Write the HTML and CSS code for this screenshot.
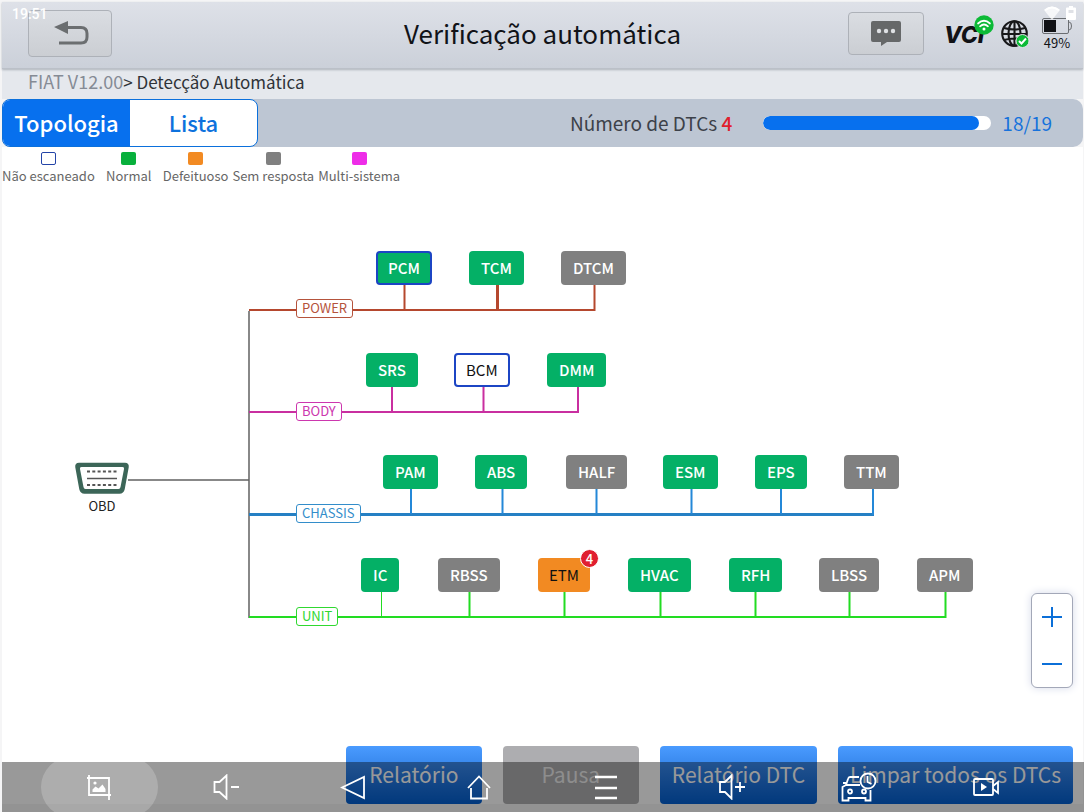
FILE: index.html
```html
<!DOCTYPE html>
<html lang="pt">
<head>
<meta charset="utf-8">
<meta name="viewport" content="width=device-width, initial-scale=1">
<title>Verificação automática</title>
<link rel="stylesheet" href="styles.css">
</head>
<body>
<div class="app">
  <header class="header">
    <time class="clock">19:51</time>
    <div class="header-left">
      <button class="tool back" type="button" aria-label="Voltar">
        <svg width="36" height="28" viewBox="0 0 36 28"><path d="M0 8 14 2v13z" fill="#6b6e70"/><path d="M13 8.500h14q6 0 6 6v3.500q0 6-6 6H5" fill="none" stroke="#6b6e70" stroke-width="3"/></svg>
      </button>
    </div>
    <h1 class="title">Verificação automática</h1>
    <div class="header-right">
      <button class="tool message" type="button" aria-label="Mensagens">
        <svg width="30" height="25" viewBox="0 0 30 25"><path d="M2 0h26q2 0 2 2v17q0 2-2 2H16l-6 4v-4H2q-2 0-2-2V2q0-2 2-2z" fill="#666869"/><g fill="#dfe1e4"><circle cx="8" cy="10" r="2.200"/><circle cx="15" cy="10" r="2.200"/><circle cx="22" cy="10" r="2.200"/></g></svg>
      </button>
      <div class="vci">VCI
        <svg class="vci-badge" width="20" height="20" viewBox="0 0 20 20"><circle cx="10" cy="10" r="9.700" fill="#0cba36"/><g fill="none" stroke="#fff" stroke-width="1.700" stroke-linecap="round"><path d="M4 8.500q6-5.500 12 0M6 11.300q4-3.600 8 0"/></g><circle cx="10" cy="14" r="1.500" fill="#fff"/></svg>
      </div>
      <svg class="globe" width="29" height="29" viewBox="0 0 29 29"><g fill="none" stroke="#171719" stroke-width="2.100"><circle cx="13.500" cy="13.500" r="12.300"/><ellipse cx="13.500" cy="13.500" rx="6" ry="12.300"/><path d="M13.500 1v25M3 8q10.500 3 21 0M1 14h25M3 20q10.500-3 21 0"/></g><circle cx="21.500" cy="21" r="6.500" fill="#0cba36" stroke="#e1e4e8"/><path d="m18 21 2.500 2.500 4.500-5" fill="none" stroke="#fff" stroke-width="1.900"/></svg>
      <div class="power">
        <svg width="30" height="16" viewBox="0 0 30 16"><rect x=".5" y=".5" width="26" height="15" rx="1.500" fill="none" stroke="#6b6e72"/><path d="M27 4q2.500 0 2.500 4T27 12" fill="none" stroke="#6b6e72"/><rect x="2" y="2" width="12" height="12" fill="#111216"/></svg>
        <span>49%</span>
      </div>
    </div>
    <div class="system-icons">
      <svg width="16" height="14" viewBox="0 0 16 14"><path d="M0 4q8-7 16 0L8 14z" fill="#fff" fill-opacity=".75"/><path d="M1 4.300q7-5.500 14 0" fill="none" stroke="#fff" stroke-width="2"/></svg>
      <svg width="10" height="14" viewBox="0 0 10 14"><path d="M3 0h4v1.500h2q1 0 1 1V13q0 1-1 1H1q-1 0-1-1V2.500q0-1 1-1h2z" fill="#fff"/><path d="M2.500 4h5v3h-5z" fill="#dfe1e6"/></svg>
    </div>
  </header>

  <nav class="crumbs"><a href="#">FIAT V12.00</a>&gt; Detecção Automática</nav>

  <div class="toolbar">
    <div class="tabs">
      <button class="tab tab-active" type="button">Topologia</button>
      <button class="tab" type="button">Lista</button>
    </div>
    <div class="scan">
      <label for="scan-progress">Número de DTCs <strong>4</strong></label>
      <progress class="bar" id="scan-progress" value="18" max="19"></progress>
      <span class="count">18/19</span>
    </div>
  </div>

  <main class="stage">
    <ul class="legend">
      <li><i class="swatch swatch-open"></i>Não escaneado</li>
      <li class="legend-wide"><i class="swatch swatch-ok"></i>Normal</li>
      <li><i class="swatch swatch-fault"></i>Defeituoso</li>
      <li><i class="swatch swatch-mute"></i>Sem resposta</li>
      <li><i class="swatch swatch-multi"></i>Multi-sistema</li>
    </ul>

    <svg class="wires" width="1080" height="590" aria-hidden="true">
      <g transform="translate(-2 -147)" fill="none" stroke-width="2">
        <path d="M128 480h121M249 311v307" stroke="#626262" stroke-width="1.500"/>
        <path d="M249 310h346.500M404.500 285v25M594.500 284v26" stroke="#b5482e"/>
        <path d="M497.500 284v26" stroke="#b5482e" stroke-width="3"/>
        <path d="M249 412h330M392 387v25M483.500 387v25M578 387v25" stroke="#c92fa0"/>
        <path d="M249 514.500h625" stroke="#2580c4" stroke-width="3"/>
        <path d="M411 489v25M502.500 489v25M596.500 489v25M691.500 489v25M781 489v25M873 489v26" stroke="#2488d8"/>
        <path d="M249 617h697.500M469.500 592v25M564.500 592v25M660.500 592v25M755.500 592v25M849.500 592v25M945.500 592v25" stroke="#22dc22"/>
        <path d="M381.500 592v25" stroke="#22dc22" stroke-width="1"/>
      </g>
    </svg>

    <div class="obd">
      <svg width="56" height="34" viewBox="0 0 56 34"><path d="M5 3h46q3 0 2.500 3L49.500 28q-.8 3.500-4 3.500h-35q-3.200 0-4-3.500L2.500 6q-.5-3 2.500-3z" fill="#3c6658" stroke="#3c6658" stroke-width="2.500"/><path d="M7.500 6h41q2 0 1.500 2l-3.500 18q-.3 2-2 2h-33q-1.700 0-2-2L6 8q-.5-2 1.500-2z" fill="#fff"/><path d="M13 10.500h30M13 24h30" stroke="#555" stroke-width="2" stroke-dasharray="3 2.300"/><path d="M13 17.500h30" stroke="#555" stroke-width="1.500"/></svg>
      <span>OBD</span>
    </div>

    <span class="bus bus-power">POWER</span>
    <button class="node ok selected n-pcm" type="button">PCM</button>
    <button class="node ok n-tcm" type="button">TCM</button>
    <button class="node mute n-dtcm" type="button">DTCM</button>

    <span class="bus bus-body">BODY</span>
    <button class="node ok n-srs" type="button">SRS</button>
    <button class="node open n-bcm" type="button">BCM</button>
    <button class="node ok n-dmm" type="button">DMM</button>

    <span class="bus bus-chassis">CHASSIS</span>
    <button class="node ok n-pam" type="button">PAM</button>
    <button class="node ok n-abs" type="button">ABS</button>
    <button class="node mute n-half" type="button">HALF</button>
    <button class="node ok n-esm" type="button">ESM</button>
    <button class="node ok n-eps" type="button">EPS</button>
    <button class="node mute n-ttm" type="button">TTM</button>

    <span class="bus bus-unit">UNIT</span>
    <button class="node ok n-ic" type="button">IC</button>
    <button class="node mute n-rbss" type="button">RBSS</button>
    <button class="node fault n-etm" type="button">ETM<span class="badge">4</span></button>
    <button class="node ok n-hvac" type="button">HVAC</button>
    <button class="node ok n-rfh" type="button">RFH</button>
    <button class="node mute n-lbss" type="button">LBSS</button>
    <button class="node mute n-apm" type="button">APM</button>

    <div class="zoom">
      <button type="button" aria-label="Aumentar"><svg width="20" height="20" viewBox="0 0 20 20"><path d="M0 10h20M10 0v20" stroke="#0b6fd8" stroke-width="2"/></svg></button>
      <button type="button" aria-label="Diminuir"><svg width="20" height="20" viewBox="0 0 20 20"><path d="M0 10h20" stroke="#0b6fd8" stroke-width="2"/></svg></button>
    </div>
  </main>

  <footer class="actions">
    <button class="action" type="button">Relatório</button>
    <button class="action paused" type="button">Pausa</button>
    <button class="action" type="button">Relatório DTC</button>
    <button class="action" type="button">Limpar todos os DTCs</button>
  </footer>

  <nav class="system-bar">
    <button class="sys sys-active" type="button" aria-label="Captura"><svg width="26" height="26" viewBox="0 0 26 26"><path d="M1 4h22v22M3 1v20h22" stroke-width="1.800"/><path d="M6.500 18v-2.500l3-3 3 2 4-4 3 4.500v3z" fill="#fff" stroke="none"/><circle cx="9" cy="9" r="1.600" fill="#fff" stroke="none"/></svg></button>
    <button class="sys" type="button" aria-label="Diminuir volume"><svg width="26" height="26" viewBox="0 0 26 26"><path d="M1.500 8h5l7-6.500v23l-7-6.500h-5zM18 13h8"/></svg></button>
    <button class="sys" type="button" aria-label="Voltar"><svg width="26" height="26" viewBox="0 0 26 26"><path d="M2 13.500 24 3v21z"/></svg></button>
    <button class="sys" type="button" aria-label="Início"><svg width="26" height="26" viewBox="0 0 26 26"><path d="M2 14 13 2.500 24 14M5 14v10.500h16V14"/></svg></button>
    <button class="sys" type="button" aria-label="Menu"><svg width="26" height="26" viewBox="0 0 26 26"><path class="thick" d="M2 3h22M2 14h22M2 24h22"/></svg></button>
    <button class="sys" type="button" aria-label="Aumentar volume"><svg width="26" height="26" viewBox="0 0 26 26"><path d="M1 8h5l6.500-6.500v23L6 18H1zM16 13h10M21 8v10"/></svg></button>
    <button class="sys" type="button" aria-label="Veículo"><svg width="36" height="30" viewBox="0 0 36 30"><path d="M18 5H9q-1.500 0-2 2l-2 6-3.500 2v13.500h6V26h17v2.500h5V18M5 13h14M2 11h3"/><circle cx="9" cy="19.500" r="2"/><circle cx="23" cy="19.500" r="2"/><circle cx="27" cy="9" r="7.500"/><path d="M26.500 4v6l4 2"/></svg></button>
    <button class="sys" type="button" aria-label="Gravar tela"><svg width="26" height="20" viewBox="0 0 26 20"><rect x="1" y="2" width="19" height="16" rx="1"/><path d="m20 9 5-4v11l-5-4"/><path d="m8 6 6 4-6 4z" fill="#fff" stroke="none"/></svg></button>
  </nav>
</div>
</body>
</html>
```
FILE: styles.css
```css
* { box-sizing: border-box; }

body {
  margin: 0;
  background: #f5f5f6;
  font-family: "Noto Sans CJK SC", "Noto Sans", sans-serif;
  color: #2f3338;
}

button {
  font: inherit;
  border: 0;
  padding: 0;
  background: none;
  color: inherit;
  display: flex;
  align-items: center;
  justify-content: center;
}

svg { display: block; }

.app {
  position: relative;
  display: flex;
  flex-direction: column;
  min-height: 100vh;
  padding: 2px 1px 8px 2px;
}

/* Header */
.header {
  position: relative;
  z-index: 1;
  display: grid;
  grid-template-columns: 1fr auto 1fr;
  align-items: center;
  height: 67px;
  padding: 0 26px 4px;
  background: linear-gradient(#dee1e8, #cbd0d9);
  border-bottom: 1px solid #bbc0c8;
  box-shadow: 0 1px 2px #aeb3bb;
}

.clock {
  position: absolute;
  left: 10px;
  top: 4px;
  color: #fff;
  font: 500 14px/16px Roboto, sans-serif;
}

.header-right {
  display: flex;
  align-items: center;
  justify-content: flex-end;
  margin-right: -15px;
}

.tool {
  border: 1px solid #adb1b8;
  border-radius: 4px;
  background: linear-gradient(#dadde2, #cbced3);
}

.back { width: 84px; height: 47px; padding-left: 3px; }
.message { width: 76px; height: 43px; margin-right: 20px; }

.title {
  margin: 0;
  font-size: 26px;
  font-weight: 400;
  line-height: 36px;
  color: #111318;
}

.vci {
  position: relative;
  width: 57px;
  padding-top: 3px;
  color: #111216;
  font: italic 800 23px/24px Inter, sans-serif;
}

.vci-badge { position: absolute; left: 30px; top: -5px; }

.globe { margin: 2px 12px 0 0; }

.power {
  display: flex;
  flex-direction: column;
  align-items: center;
  padding-top: 4px;
  font-size: 13px;
  line-height: 18px;
  color: #111216;
}

.system-icons {
  position: absolute;
  right: 7px;
  top: 4px;
  display: flex;
  gap: 6px;
}

/* Breadcrumb */
.crumbs {
  height: 30px;
  padding: 0 26px;
  background: #e5e8ed;
  font-size: 17px;
  line-height: 25px;
}

.crumbs a { font-size: 18px; color: #858b95; text-decoration: none; }

/* Tabs and progress */
.toolbar {
  display: flex;
  justify-content: space-between;
  height: 48px;
  background: #bdc6d3;
  border-radius: 8px 10px 10px 8px;
}

.tabs {
  display: grid;
  grid-template-columns: 1fr 1fr;
  width: 256px;
  overflow: hidden;
  border: 1px solid #0b70dc;
  border-radius: 8px;
  background: #fff;
}

.tab {
  padding-bottom: 2px;
  font-size: 22px;
  font-weight: 500;
  color: #0d72dd;
}

.tab-active { background: #0770ee; color: #fff; }

.scan {
  display: flex;
  align-items: center;
  padding: 0 31px 2px 0;
  font-size: 19px;
  color: #3c4149;
}

.scan strong { font-weight: 500; color: #e0202c; }

.bar {
  appearance: none;
  width: 228px;
  height: 14px;
  margin: 2px 11px 0 31px;
  overflow: hidden;
  border: 0;
  border-radius: 7px;
  background: #fff;
}

.bar::-webkit-progress-bar { background: #fff; }
.bar::-webkit-progress-value { background: #0770ee; border-radius: 7px; }

.count { color: #1672dc; }

/* Topology */
.stage {
  position: relative;
  flex: 1;
  min-height: 540px;
  background: #fff;
}

.legend {
  display: flex;
  gap: 4px;
  margin: 0;
  padding: 5px 0 0;
  list-style: none;
  font-size: 13px;
  line-height: 22px;
  color: #666;
}

.legend li {
  display: flex;
  flex-direction: column;
  align-items: center;
}

.legend-wide { min-width: 60px; }

.swatch {
  width: 15px;
  height: 13px;
  border-radius: 2px;
}

.swatch-open { border: 1px solid #2444a8; }
.swatch-ok { background: #08b03c; }
.swatch-fault { background: #f28a22; }
.swatch-mute { background: #808080; }
.swatch-multi { background: #ee2de8; }

.wires { position: absolute; left: 0; top: 0; }

.obd {
  position: absolute;
  left: 72px;
  top: 314px;
  display: flex;
  flex-direction: column;
  align-items: center;
  font-size: 13px;
  line-height: 22px;
  color: #222;
}

.bus {
  position: absolute;
  left: 294px;
  height: 19px;
  padding: 0 5px;
  border: 1px solid;
  border-radius: 3px;
  background: #fff;
  font-size: 13px;
  line-height: 16px;
}

.bus-power { top: 152px; color: #b5533c; }
.bus-body { top: 255px; color: #cc37ae; }
.bus-chassis { top: 357px; color: #338dca; }
.bus-unit { top: 460px; color: #30d830; }

.node {
  position: absolute;
  height: 34px;
  padding: 0 12px 2px;
  border-radius: 4px;
  font-size: 15px;
  font-weight: 500;
  color: #fff;
}

.ok { background: #04b066; }
.mute { background: #808080; }
.fault { background: #f28a22; color: #111; font-weight: 400; padding: 0 11px 2px; }
.open { background: #fff; color: #111; font-weight: 400; }
.selected, .open { border: 2px solid #1c45c4; padding: 0 10px 2px; }

.n-pcm { left: 374px; top: 104px; }
.n-tcm { left: 467px; top: 104px; }
.n-dtcm { left: 559px; top: 104px; }
.n-srs { left: 364px; top: 206px; }
.n-bcm { left: 452px; top: 206px; }
.n-dmm { left: 545px; top: 206px; }
.n-pam { left: 381px; top: 308px; }
.n-abs { left: 473px; top: 308px; }
.n-half { left: 564px; top: 308px; }
.n-esm { left: 661px; top: 308px; }
.n-eps { left: 753px; top: 308px; }
.n-ttm { left: 842px; top: 308px; }
.n-ic { left: 359px; top: 411px; }
.n-rbss { left: 436px; top: 411px; }
.n-etm { left: 536px; top: 411px; }
.n-hvac { left: 626px; top: 411px; }
.n-rfh { left: 727px; top: 411px; }
.n-lbss { left: 817px; top: 411px; }
.n-apm { left: 915px; top: 411px; }

.badge {
  position: absolute;
  right: -9px;
  top: -9px;
  width: 19px;
  height: 19px;
  border: 1px solid #fff;
  border-radius: 50%;
  background: #e01f30;
  color: #fff;
  font-size: 13px;
  font-weight: 500;
  line-height: 17px;
  text-align: center;
}

.zoom {
  position: absolute;
  right: 10px;
  bottom: 58px;
  display: grid;
  width: 42px;
  height: 95px;
  border: 1px solid #a3a8b8;
  border-radius: 6px;
  background: #fff;
  box-shadow: 0 0 8px #d5daea;
}

/* Actions */
.actions {
  display: flex;
  justify-content: flex-end;
  gap: 21px;
  padding-right: 10px;
  background: #fff;
}

.action {
  min-width: 136px;
  height: 58px;
  padding: 0 12px 2px;
  border-radius: 4px;
  background: linear-gradient(#4a9bff, #3989ee 30%, #035fd0);
  color: #fff;
  font-size: 21px;
}

.paused {
  background: #adadb0;
  color: #ececec;
}

/* System navigation, over the page */
.system-bar {
  position: absolute;
  left: 2px;
  right: 0;
  bottom: 0;
  display: grid;
  grid-template-columns: repeat(8, 1fr);
  align-items: center;
  height: 50px;
  padding: 0 35px 0 34px;
  overflow: hidden;
  background: rgba(0, 0, 0, 0.4);
}

.sys { height: 60px; margin: -5px 5px; }
.sys-active { border-radius: 36px; background: rgba(255, 255, 255, 0.2); }

.sys svg {
  fill: none;
  stroke: #fff;
  stroke-width: 1.8px;
}

.sys .thick { stroke-width: 2.4px; }
```
